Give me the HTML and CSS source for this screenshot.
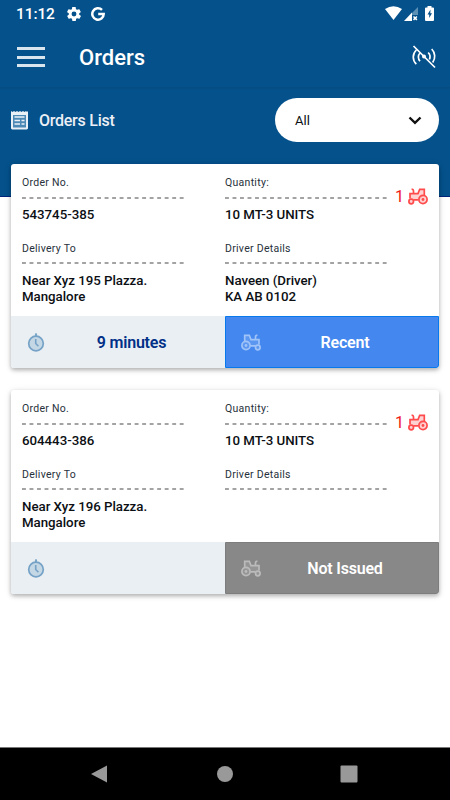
FILE: index.html
```html
<!DOCTYPE html>
<html lang="en">
<head>
<meta charset="utf-8">
<title>Orders</title>
<link rel="stylesheet" href="styles.css">
</head>
<body>
<svg class="defs" aria-hidden="true">
  <symbol id="tractor" viewBox="0 0 20 17">
    <path class="tint" d="M3.600 7V1.200H8.500l1.600 4.300H18V11l-4 1H9z"/>
    <circle class="tint" cx="5" cy="11.500" r="4.100"/><circle class="tint" cx="16.800" cy="13.500" r="2.300"/>
    <path class="line" d="M3.700 7V1.300H8.300L10 5.600h8V10.500M9.500 11.900h4.800M14.500 5.400V2.800q0-1.400 1.900-1.600"/>
    <circle class="line" cx="5" cy="11.500" r="4.100"/><circle class="line" cx="16.800" cy="13.500" r="2.300"/>
    <circle class="dot" cx="5" cy="11.500" r="1.400"/>
  </symbol>
  <symbol id="clock" viewBox="0 0 18 19">
    <circle cx="9" cy="10.500" r="7.300" fill="#c4d7e5" stroke="#75a2c6" stroke-width="1.700"/>
    <path d="M9 .2v3M7.900 2h2.200M8.700 6v4.500l2.700 2.700" fill="none" stroke="#75a2c6" stroke-width="1.600"/>
  </symbol>
  <symbol id="dashes" viewBox="0 0 163 2">
    <path d="M0 1h162" stroke="#858585" stroke-width="1.300" stroke-dasharray="3.900 3.610" fill="none"/>
  </symbol>
</svg>

<header class="top">
  <div class="status">
    <span class="time">11:12</span>
    <svg class="gear" viewBox="2 2 20 20"><path fill="#fff" d="M19.400 13c0-.3.100-.6.100-1s0-.7-.1-1l2.100-1.600c.2-.2.300-.4.100-.6l-2-3.500c-.1-.2-.4-.3-.6-.2l-2.500 1c-.5-.4-1.100-.7-1.700-1l-.4-2.600c0-.2-.2-.4-.5-.4h-4c-.2 0-.5.200-.5.400l-.4 2.600c-.6.300-1.200.6-1.700 1l-2.500-1c-.2-.1-.5 0-.6.200l-2 3.500c-.1.200-.1.500.1.600L4.600 11c0 .3-.1.700-.1 1s0 .7.100 1l-2.100 1.600c-.2.200-.3.400-.1.600l2 3.500c.1.200.4.300.6.200l2.500-1c.5.400 1.100.7 1.700 1l.4 2.600c0 .2.200.4.500.4h4c.2 0 .5-.2.500-.4l.4-2.600c.6-.3 1.200-.6 1.700-1l2.500 1c.2.100.5 0 .6-.2l2-3.500c.1-.2.100-.5-.1-.6L19.400 13zM12 15.500a3.500 3.500 0 1 1 0-7 3.500 3.500 0 0 1 0 7z"/></svg>
    <svg class="g" viewBox="0 0 14 14"><path d="M11 2.900A5.700 5.700 0 1 0 12.700 7H7.200" fill="none" stroke="#fff" stroke-width="2.500"/></svg>
    <svg class="wifi" viewBox="0 0 17 14"><path fill="#fff" d="M0 3Q8.500-2.600 17 3L8.500 14z"/></svg>
    <svg class="signal" viewBox="0 0 14 14"><path fill="#5d90b5" d="M14 0v8H8V6z"/><path fill="#fff" d="M8 5.500V14H0z"/><path d="M9.500 9.500l3.400 3.400m0-3.400l-3.400 3.400" stroke="#fff" stroke-width="1.500"/></svg>
    <svg class="battery" viewBox="0 0 9 15"><path fill="#fff" d="M2.500 0h4v1.500H8q1 0 1 1V14q0 1-1 1H1q-1 0-1-1V2.500q0-1 1-1h1.500z"/><path fill="#05518b" d="M5.500 3.500L2.500 8.500h1.700v3.500L7 7.200H5.300z"/></svg>
  </div>
  <div class="bar">
    <span class="menu"><i></i><i></i><i></i></span>
    <h1>Orders</h1>
    <svg class="antenna" viewBox="0 0 24 24"><g fill="none" stroke="#fff" stroke-width="1.700"><path d="M4.300 5a9.800 9.800 0 0 0 0 14.200M8 8a6 6 0 0 0 0 8.200M19.700 4a10.500 10.500 0 0 1 1 13.500M16.200 7.500a6.300 6.300 0 0 1 1.200 7M1.500 1L23 22.500"/></g><circle cx="12" cy="11.500" r="2" fill="#fff"/></svg>
  </div>
</header>

<section class="filter">
  <svg class="list-icon" viewBox="0 0 17 19"><path fill="#4c89b5" d="M1 3h15v15H1z"/><path fill="#e9f1f7" d="M0 0l1.500 1L3 0l1.500 1L6 0l1.500 1L9 0l1.500 1L12 0l1.500 1L15 0l1 1 1-1v17.500l-1 1H1l-1-1zm2 4v12.500h13V4z"/><path d="M3.500 6h10M3.500 9.500H9m1.500 0h3M3.500 13H9m1.500 0h3" stroke="#e9f1f7" stroke-width="1.700"/></svg>
  <h2>Orders List</h2>
  <div class="select"><span>All</span><svg class="chevron" viewBox="0 0 14 9"><path d="M1.500 1.500L7 6.800l5.500-5.300" fill="none" stroke="#111" stroke-width="2.400"/></svg></div>
</section>

<main>
  <article class="card">
    <div class="details">
      <div class="field"><span class="label">Order No.</span><svg class="dashes"><use href="#dashes"/></svg><p>543745-385</p></div>
      <div class="field"><span class="label">Quantity:</span><svg class="dashes"><use href="#dashes"/></svg><p>10 MT-3 UNITS</p></div>
      <div class="field"><span class="label">Delivery To</span><svg class="dashes"><use href="#dashes"/></svg><p>Near Xyz 195 Plazza.<br>Mangalore</p></div>
      <div class="field"><span class="label">Driver Details</span><svg class="dashes"><use href="#dashes"/></svg><p>Naveen (Driver)<br>KA AB 0102</p></div>
    </div>
    <div class="count"><span>1</span><svg class="tractor red"><use href="#tractor"/></svg></div>
    <div class="footer">
      <div class="eta"><svg class="clock"><use href="#clock"/></svg><b>9 minutes</b></div>
      <div class="state recent"><svg class="tractor"><use href="#tractor"/></svg><b>Recent</b></div>
    </div>
  </article>
  <article class="card">
    <div class="details">
      <div class="field"><span class="label">Order No.</span><svg class="dashes"><use href="#dashes"/></svg><p>604443-386</p></div>
      <div class="field"><span class="label">Quantity:</span><svg class="dashes"><use href="#dashes"/></svg><p>10 MT-3 UNITS</p></div>
      <div class="field"><span class="label">Delivery To</span><svg class="dashes"><use href="#dashes"/></svg><p>Near Xyz 196 Plazza.<br>Mangalore</p></div>
      <div class="field"><span class="label">Driver Details</span><svg class="dashes"><use href="#dashes"/></svg></div>
    </div>
    <div class="count"><span>1</span><svg class="tractor red"><use href="#tractor"/></svg></div>
    <div class="footer">
      <div class="eta"><svg class="clock"><use href="#clock"/></svg></div>
      <div class="state pending"><svg class="tractor"><use href="#tractor"/></svg><b>Not Issued</b></div>
    </div>
  </article>
</main>

<nav class="nav">
  <svg viewBox="0 0 18 18"><path fill="#999" d="M0 9L16 .500v17z"/></svg>
  <svg viewBox="0 0 18 18"><circle cx="9" cy="9" r="8" fill="#999"/></svg>
  <svg viewBox="0 0 18 18"><rect x=".500" y=".500" width="17" height="17" rx="1" fill="#999"/></svg>
</nav>
</body>
</html>
```
FILE: styles.css
```css
* { box-sizing: border-box; }
body {
  margin: 0;
  height: 800px;
  display: flex;
  flex-direction: column;
  overflow: hidden;
  background: #fff;
  color: #0c0f14;
  font-family: Roboto, "Liberation Sans", sans-serif;
}
svg { display: block; flex: none; }
h1, h2, p { margin: 0; font-weight: 500; }
.defs { position: absolute; width: 0; height: 0; }

.top { height: 87px; background: #05518b; color: #fff; flex: none; }
.status { height: 27px; display: flex; align-items: center; padding: 0 16px 0 16px; }
.time { font-size: 15.500px; font-weight: 500; line-height: 27px; width: 51px; padding-top: 1px; letter-spacing: -.1px; }
.gear { width: 14px; height: 14px; }
.g { width: 14px; height: 14px; margin-left: 10px; }
.wifi { width: 17px; height: 14px; margin-left: auto; margin-top: -2px; }
.signal { width: 14px; height: 14px; margin-left: 2px; }
.battery { width: 9px; height: 15px; margin-left: 7px; }
.bar { height: 60px; display: flex; align-items: center; padding: 0 14px 0 17px; }
.menu { width: 28px; height: 20px; display: flex; flex-direction: column; justify-content: space-between; }
.menu i { height: 3px; background: #d8e5ef; }
.bar h1 { margin-left: 34px; font-size: 22px; line-height: 28px; padding-top: 2px; }
.antenna { width: 24px; height: 24px; margin-left: auto; }

.filter {
  height: 110px;
  flex: none;
  display: flex;
  align-items: flex-start;
  padding: 11px 11px 0;
  background: linear-gradient(#044b80, #05518b 3px);
  border-bottom: 1px solid #00257a;
}
.list-icon { width: 17px; height: 19px; margin-top: 13px; }
.filter h2 { margin: 12px 0 0 11px; font-size: 16px; line-height: 22px; letter-spacing: -.25px; color: #eceff5; }
.select {
  margin-left: auto;
  width: 164px;
  height: 44px;
  border-radius: 22px;
  background: #fff;
  display: flex;
  align-items: center;
  justify-content: space-between;
  padding: 0 17px 0 20px;
  font-size: 13px;
}
.chevron { width: 14px; height: 9px; }

main { flex: 1; padding: 0 11px; margin-top: -33px; display: flex; flex-direction: column; gap: 22px; }
.card {
  position: relative;
  height: 204px;
  display: flex;
  flex-direction: column;
  border-radius: 3px;
  background: #fff;
  box-shadow: 0 2px 4px rgba(0, 0, 0, .28), 0 1px 9px rgba(0, 0, 0, .08);
}
.details {
  height: 152px;
  display: grid;
  grid-template-columns: 203px 1fr;
  grid-template-rows: 65.500px 1fr;
  padding: 11px 0 0 11px;
}
.label { display: block; font-size: 10.500px; line-height: 16px; letter-spacing: .28px; color: #27313b; }
.dashes { width: 163px; height: 2px; margin-top: 5.500px; }
.field p { margin-top: 8.500px; font-size: 13.300px; font-weight: 500; line-height: 16px; letter-spacing: -.03px; }
.count {
  position: absolute;
  top: 24px;
  right: 11px;
  display: flex;
  align-items: center;
  gap: 4px;
  color: #f01818;
  font-size: 16px;
  line-height: 18px;
}
.tractor { width: 20px; height: 17px; color: #a0c4f8; }
.line { fill: none; stroke: currentColor; stroke-width: 1.700; }
.tint { fill: currentColor; fill-opacity: .25; }
.dot { fill: currentColor; }
.red { color: #ff4b4b; transform: scaleX(-1); margin-top: -1px; }
.footer { display: flex; height: 52px; }
.footer > div { display: flex; align-items: center; padding-left: 16px; }
.eta { width: 214px; background: #eaeff3; color: #003087; border-bottom-left-radius: 3px; }
.clock { width: 18px; height: 19px; }
.footer b { flex: 1; text-align: center; font-size: 16px; font-weight: 600; letter-spacing: -.2px; }
.eta b { padding-right: 7px; }
.state { width: 214px; color: #fff; border-bottom-right-radius: 3px; }
.state b { padding-right: 9px; }
.recent { background: #4487ee; border: 1px solid #0879ed; }
.pending { background: #888; border: 1px solid #7d7d7d; }
.pending .tractor { color: #bbb; }
.footer .state { padding-left: 15px; }

.nav {
  height: 53px;
  flex: none;
  background: #000;
  border-top: 1px solid #777;
  display: flex;
  justify-content: space-between;
  align-items: center;
  padding: 0 92px 0 91px;
}
.nav svg { width: 18px; height: 18px; }
```
